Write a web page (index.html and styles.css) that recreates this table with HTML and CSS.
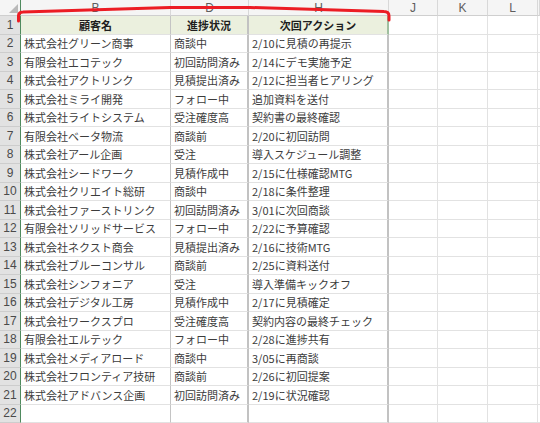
FILE: index.html
```html
<!DOCTYPE html>
<html lang="ja">
<head>
<meta charset="utf-8">
<link rel="stylesheet" href="styles.css">
</head>
<body>
<div class="sheet">
  <div class="row colhdr">
    <div class="c rh corner"><span class="tri"></span></div>
    <div class="c b">B</div>
    <div class="c d">D</div>
    <div class="c h">H</div>
    <div class="c j">J</div>
    <div class="c k">K</div>
    <div class="c l">L</div>
    <div class="c f"></div>
  </div>
  <div class="row head">
    <div class="c rh">1</div>
    <div class="c b">顧客名</div>
    <div class="c d">進捗状況</div>
    <div class="c h">次回アクション</div>
    <div class="c j"></div><div class="c k"></div><div class="c l"></div><div class="c f"></div>
  </div>
  <div class="row"><div class="c rh">2</div><div class="c b">株式会社グリーン商事</div><div class="c d">商談中</div><div class="c h">2/10に見積の再提示</div><div class="c j"></div><div class="c k"></div><div class="c l"></div><div class="c f"></div></div>
  <div class="row"><div class="c rh">3</div><div class="c b">有限会社エコテック</div><div class="c d">初回訪問済み</div><div class="c h">2/14にデモ実施予定</div><div class="c j"></div><div class="c k"></div><div class="c l"></div><div class="c f"></div></div>
  <div class="row"><div class="c rh">4</div><div class="c b">株式会社アクトリンク</div><div class="c d">見積提出済み</div><div class="c h">2/12に担当者ヒアリング</div><div class="c j"></div><div class="c k"></div><div class="c l"></div><div class="c f"></div></div>
  <div class="row"><div class="c rh">5</div><div class="c b">株式会社ミライ開発</div><div class="c d">フォロー中</div><div class="c h">追加資料を送付</div><div class="c j"></div><div class="c k"></div><div class="c l"></div><div class="c f"></div></div>
  <div class="row"><div class="c rh">6</div><div class="c b">株式会社ライトシステム</div><div class="c d">受注確度高</div><div class="c h">契約書の最終確認</div><div class="c j"></div><div class="c k"></div><div class="c l"></div><div class="c f"></div></div>
  <div class="row"><div class="c rh">7</div><div class="c b">有限会社ベータ物流</div><div class="c d">商談前</div><div class="c h">2/20に初回訪問</div><div class="c j"></div><div class="c k"></div><div class="c l"></div><div class="c f"></div></div>
  <div class="row"><div class="c rh">8</div><div class="c b">株式会社アール企画</div><div class="c d">受注</div><div class="c h">導入スケジュール調整</div><div class="c j"></div><div class="c k"></div><div class="c l"></div><div class="c f"></div></div>
  <div class="row"><div class="c rh">9</div><div class="c b">株式会社シードワーク</div><div class="c d">見積作成中</div><div class="c h">2/15に仕様確認MTG</div><div class="c j"></div><div class="c k"></div><div class="c l"></div><div class="c f"></div></div>
  <div class="row"><div class="c rh">10</div><div class="c b">株式会社クリエイト総研</div><div class="c d">商談中</div><div class="c h">2/18に条件整理</div><div class="c j"></div><div class="c k"></div><div class="c l"></div><div class="c f"></div></div>
  <div class="row"><div class="c rh">11</div><div class="c b">株式会社ファーストリンク</div><div class="c d">初回訪問済み</div><div class="c h">3/01に次回商談</div><div class="c j"></div><div class="c k"></div><div class="c l"></div><div class="c f"></div></div>
  <div class="row"><div class="c rh">12</div><div class="c b">有限会社ソリッドサービス</div><div class="c d">フォロー中</div><div class="c h">2/22に予算確認</div><div class="c j"></div><div class="c k"></div><div class="c l"></div><div class="c f"></div></div>
  <div class="row"><div class="c rh">13</div><div class="c b">株式会社ネクスト商会</div><div class="c d">見積提出済み</div><div class="c h">2/16に技術MTG</div><div class="c j"></div><div class="c k"></div><div class="c l"></div><div class="c f"></div></div>
  <div class="row"><div class="c rh">14</div><div class="c b">株式会社ブルーコンサル</div><div class="c d">商談前</div><div class="c h">2/25に資料送付</div><div class="c j"></div><div class="c k"></div><div class="c l"></div><div class="c f"></div></div>
  <div class="row"><div class="c rh">15</div><div class="c b">株式会社シンフォニア</div><div class="c d">受注</div><div class="c h">導入準備キックオフ</div><div class="c j"></div><div class="c k"></div><div class="c l"></div><div class="c f"></div></div>
  <div class="row"><div class="c rh">16</div><div class="c b">株式会社デジタル工房</div><div class="c d">見積作成中</div><div class="c h">2/17に見積確定</div><div class="c j"></div><div class="c k"></div><div class="c l"></div><div class="c f"></div></div>
  <div class="row"><div class="c rh">17</div><div class="c b">株式会社ワークスプロ</div><div class="c d">受注確度高</div><div class="c h">契約内容の最終チェック</div><div class="c j"></div><div class="c k"></div><div class="c l"></div><div class="c f"></div></div>
  <div class="row"><div class="c rh">18</div><div class="c b">有限会社エルテック</div><div class="c d">フォロー中</div><div class="c h">2/28に進捗共有</div><div class="c j"></div><div class="c k"></div><div class="c l"></div><div class="c f"></div></div>
  <div class="row"><div class="c rh">19</div><div class="c b">株式会社メディアロード</div><div class="c d">商談中</div><div class="c h">3/05に再商談</div><div class="c j"></div><div class="c k"></div><div class="c l"></div><div class="c f"></div></div>
  <div class="row"><div class="c rh">20</div><div class="c b">株式会社フロンティア技研</div><div class="c d">商談前</div><div class="c h">2/26に初回提案</div><div class="c j"></div><div class="c k"></div><div class="c l"></div><div class="c f"></div></div>
  <div class="row"><div class="c rh">21</div><div class="c b">株式会社アドバンス企画</div><div class="c d">初回訪問済み</div><div class="c h">2/19に状況確認</div><div class="c j"></div><div class="c k"></div><div class="c l"></div><div class="c f"></div></div>
  <div class="row"><div class="c rh">22</div><div class="c b"></div><div class="c d"></div><div class="c h"></div><div class="c j"></div><div class="c k"></div><div class="c l"></div><div class="c f"></div></div>
  <svg class="mark" width="400" height="30" viewBox="0 0 400 30">
    <path d="M18.5 21 L18.5 16 Q18.5 12 23 12 L170 7.5 L250 7.5 L384 11.5 Q389 11.5 389 16 L389 20" fill="none" stroke="#ec1c24" stroke-width="3" stroke-linejoin="round" stroke-linecap="round"/>
  </svg>
</div>
</body>
</html>
```

FILE: styles.css
```css
html, body {
  margin: 0;
  padding: 0;
  background: #ffffff;
}
.sheet {
  position: relative;
  width: 540px;
  height: 423px;
  overflow: hidden;
  font-family: "Noto Sans CJK JP", "Noto Sans", sans-serif;
  font-size: 11px;
  color: #3c3c3c;
}
.row {
  display: grid;
  grid-template-columns: 21px 150px 78px 140px 49px 50px 50px 2px;
  height: 18.5px;
}
.c {
  box-sizing: border-box;
  border-right: 1px solid #e2e2e2;
  border-bottom: 1px solid #e2e2e2;
  display: flex;
  align-items: center;
  white-space: nowrap;
  overflow: hidden;
  padding-left: 3px;
}
.rh {
  background: #e2e2e2;
  border-right: 1px solid #4f8a5e;
  border-bottom: 1px solid #cdcdcd;
  justify-content: center;
  padding-left: 0;
  color: #4a4a4a;
  font-family: "Liberation Sans", Arial, sans-serif;
  font-size: 12px;
}
.b { border-right-color: #c4c4c4; }
.d { border-right: 2px solid #c2c2c2; }
.h { border-right: 2px solid #c2c2c2; }
.colhdr {
  height: 16px;
}
.colhdr .c {
  background: #f5f5f5;
  border-bottom: 1px solid #cfcfcf;
  border-right: 1px solid #d8d8d8;
  justify-content: center;
  padding-left: 0;
  color: #5e5e5e;
  font-family: "Liberation Sans", Arial, sans-serif;
  font-size: 12px;
}
.colhdr .corner {
  position: relative;
  background: #f5f5f5;
  border-right: 1px solid #4f8a5e;
}
.tri {
  position: absolute;
  right: 2px;
  bottom: 2px;
  width: 0;
  height: 0;
  border-left: 9px solid transparent;
  border-bottom: 9px solid #b9b9b9;
}
.head .b, .head .d, .head .h {
  background: #ebf0de;
  justify-content: center;
  padding-left: 0;
  font-weight: bold;
  color: #1e1e1e;
}
.head .h { border-right-color: #9fbf9f; }
.mark {
  position: absolute;
  left: 0;
  top: 0;
}
```
